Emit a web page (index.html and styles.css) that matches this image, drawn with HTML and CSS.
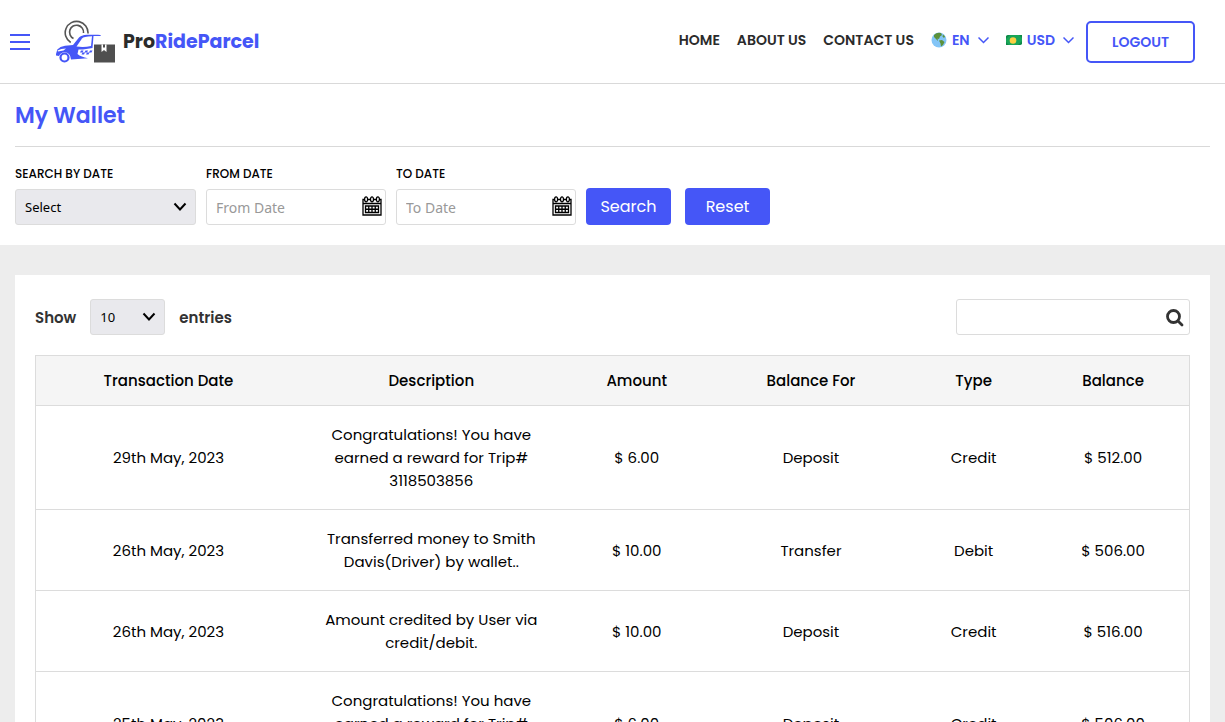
FILE: index.html
```html
<!DOCTYPE html>
<html lang="en">

<head>
    <meta charset="UTF-8">
    <meta name="viewport" content="width=device-width, initial-scale=1.0">
    <title>My Wallet</title>
    <link rel="stylesheet" href="styles.css">
</head>

<body>
    <header class="header">
        <button class="menu-btn" type="button" aria-label="Menu">
            <span></span>
            <span></span>
            <span></span>
        </button>
        <a class="logo" href="#">
            <svg width="60" height="44" viewBox="0 0 60 44" aria-hidden="true">
                <!-- pin -->
                <path d="M14.700 22.500A11.400 11.400 0 1 1 32 13.500" fill="none" stroke="#555" stroke-width="1.600" />
                <path d="M17.500 18.500A7 7 0 1 1 27.500 13" fill="none" stroke="#555" stroke-width="1.600" />
                <!-- car -->
                <path d="M0 34L1.300 29.500Q4 26.500 9 25.800L17 25L23 17.500Q25 15.200 31 14.700H42Q45 14.700 45 16H37.500L36.500 28L27 29.500L22.500 29.500L21.500 34Q25 37 32 38.200L15 39.500Q14.500 32.500 8.500 32.300Q4.500 32.500 3 36L0 35.500Z" fill="#4556f7" />
                <path d="M20.500 26.500L26 18.500Q27.500 16.500 36 16.300L35 26Q28 27.500 20.500 26.500Z" fill="#fff" />
                <path d="M1.500 30.500Q5 28.500 10 28.500L7.500 30.500L2 31.500Z" fill="#fff" />
                <circle cx="8.500" cy="37.500" r="4" fill="#fff" stroke="#4556f7" stroke-width="2.200" />
                <path d="M25 30.500h2.500l-1 2h-2.500zM29.500 30.500h2.500l-1 2h-2.500zM34 30.500h2.500l-1 2h-2.500zM26.500 32.500h2.500l-1 2h-2.500zM31 32.500h2.500l-1 2h-2.500z" fill="#4556f7" />
                <!-- parcel -->
                <path d="M38 24.500H59V42.500H38Z" fill="#4f4f4f" />
                <path d="M45.500 24.500h5v7.500l-2.500-2l-2.500 2z" fill="#fff" />
                <path d="M47 24.500h2v3h-2z" fill="#4f4f4f" />
            </svg>
            <span class="logo-text">Pro<span>RideParcel</span></span>
        </a>
        <nav class="nav">
            <a href="#">HOME</a>
            <a href="#">ABOUT US</a>
            <a href="#">CONTACT US</a>
            <button class="picker" type="button">
                <svg width="16" height="16" viewBox="0 0 16 16" aria-hidden="true">
                    <circle cx="8" cy="8" r="7.500" fill="#83c5f7" />
                    <path d="M3 3Q6 0 10 1L11 3L9 4.500L8 7L6.500 6.500L7 9L4.500 6.500L3 5Z" fill="#5c913b" />
                    <path d="M8 8.500L11 8L13.500 10L12 13L10 14.500L9.500 11.500Z" fill="#5c913b" />
                    <path d="M12 2.500L14 4.500L13 6L11.500 4.500Z" fill="#5c913b" />
                </svg>
                EN
                <svg class="caret" width="11" height="8" viewBox="0 0 11 8" aria-hidden="true">
                    <path d="M0.500 1.500L5.500 6.500L10.500 1.500" />
                </svg>
            </button>
            <button class="picker" type="button">
                <svg width="16" height="10" viewBox="0 0 16 10" aria-hidden="true">
                    <path d="M2 0H16V9L14 10H0V1Z" fill="#18a558" />
                    <path d="M0 4L4 0H2L0 1ZM0 7L3 10H0ZM16 3L13 0H16ZM16 6L12 10H14L16 9Z" fill="#0f8a48" />
                    <circle cx="7" cy="5.500" r="3.300" fill="#fbd043" />
                </svg>
                USD
                <svg class="caret" width="11" height="8" viewBox="0 0 11 8" aria-hidden="true">
                    <path d="M0.500 1.500L5.500 6.500L10.500 1.500" />
                </svg>
            </button>
        </nav>
        <button class="logout" type="button">LOGOUT</button>
    </header>

    <section class="top">
        <h1>My Wallet</h1>
        <form class="filter">
            <div class="field period">
                <label for="period">SEARCH BY DATE</label>
                <div class="select-box">
                    <select id="period">
                        <option>Select</option>
                    </select>
                    <svg class="arrow" width="14" height="10" viewBox="0 0 14 10" aria-hidden="true">
                        <path d="M1.500 1.500L7 7.500L12.500 1.500" />
                    </svg>
                </div>
            </div>
            <div class="field">
                <label for="from">FROM DATE</label>
                <div class="date-box">
                    <input type="text" id="from" placeholder="From Date">
                    <svg class="calendar" width="20" height="20" viewBox="0 0 20 20" aria-hidden="true">
                        <path d="M2 3.500H1V19H19V3.500H18M1 7.500H19M6 3.500H8M12 3.500H14" />
                        <path d="M3.500 10H16.500V16.500H3.500ZM3.500 13.250H16.500M6.750 10V16.500M10 10V16.500M13.250 10V16.500" />
                        <path d="M2.600 3.300a1.500 2.500 0 1 0 3 0a1.500 2.500 0 1 0-3 0M8.500 3.300a1.500 2.500 0 1 0 3 0a1.500 2.500 0 1 0-3 0M14.400 3.300a1.500 2.500 0 1 0 3 0a1.500 2.500 0 1 0-3 0" />
                    </svg>
                </div>
            </div>
            <div class="field">
                <label for="to">TO DATE</label>
                <div class="date-box">
                    <input type="text" id="to" placeholder="To Date">
                    <svg class="calendar" width="20" height="20" viewBox="0 0 20 20" aria-hidden="true">
                        <path d="M2 3.500H1V19H19V3.500H18M1 7.500H19M6 3.500H8M12 3.500H14" />
                        <path d="M3.500 10H16.500V16.500H3.500ZM3.500 13.250H16.500M6.750 10V16.500M10 10V16.500M13.250 10V16.500" />
                        <path d="M2.600 3.300a1.500 2.500 0 1 0 3 0a1.500 2.500 0 1 0-3 0M8.500 3.300a1.500 2.500 0 1 0 3 0a1.500 2.500 0 1 0-3 0M14.400 3.300a1.500 2.500 0 1 0 3 0a1.500 2.500 0 1 0-3 0" />
                    </svg>
                </div>
            </div>
            <div class="filter-btns">
                <button class="btn" type="button">Search</button>
                <button class="btn" type="reset">Reset</button>
            </div>
        </form>
    </section>

    <main class="panel">
        <div class="tools">
            <label for="entries">Show</label>
            <div class="select-box small">
                <select id="entries">
                    <option>10</option>
                    <option>25</option>
                    <option>50</option>
                </select>
                <svg class="arrow" width="14" height="10" viewBox="0 0 14 10" aria-hidden="true">
                    <path d="M1.500 1.500L7 7.500L12.500 1.500" />
                </svg>
            </div>
            <span>entries</span>
            <div class="search-box">
                <input type="text" aria-label="Search entries">
                <svg class="glass" width="18" height="18" viewBox="0 0 18 18" aria-hidden="true">
                    <circle cx="7.500" cy="7.500" r="6" />
                    <path d="M12 12L16 16" />
                </svg>
            </div>
        </div>
        <table class="wallet">
            <thead>
                <tr>
                    <th class="col-date">Transaction Date</th>
                    <th class="col-desc">Description</th>
                    <th class="col-amount">Amount</th>
                    <th class="col-for">Balance For</th>
                    <th class="col-type">Type</th>
                    <th>Balance</th>
                </tr>
            </thead>
            <tbody>
                <tr>
                    <td>29th May, 2023</td>
                    <td>Congratulations! You have earned a reward for Trip# 3118503856</td>
                    <td>$ 6.00</td>
                    <td>Deposit</td>
                    <td>Credit</td>
                    <td>$ 512.00</td>
                </tr>
                <tr>
                    <td>26th May, 2023</td>
                    <td>Transferred money to Smith Davis(Driver) by wallet..</td>
                    <td>$ 10.00</td>
                    <td>Transfer</td>
                    <td>Debit</td>
                    <td>$ 506.00</td>
                </tr>
                <tr>
                    <td>26th May, 2023</td>
                    <td>Amount credited by User via credit/debit.</td>
                    <td>$ 10.00</td>
                    <td>Deposit</td>
                    <td>Credit</td>
                    <td>$ 516.00</td>
                </tr>
                <tr>
                    <td>25th May, 2023</td>
                    <td>Congratulations! You have earned a reward for Trip# 3118503856</td>
                    <td>$ 6.00</td>
                    <td>Deposit</td>
                    <td>Credit</td>
                    <td>$ 506.00</td>
                </tr>
            </tbody>
        </table>
    </main>
</body>

</html>
```
FILE: styles.css
```css
* {
    box-sizing: border-box;
}

html {
    scrollbar-width: none;
}

body {
    margin: 0;
    background-color: #ededed;
    color: #000;
    font-family: Poppins, Inter, sans-serif;
    font-size: 15px;
}

a {
    color: inherit;
    text-decoration: none;
}

button,
input,
select {
    margin: 0;
    font-family: inherit;
}

button {
    cursor: pointer;
}

/* header */
.header {
    display: flex;
    align-items: center;
    height: 84px;
    padding: 0 30px 0 10px;
    border-bottom: 1px solid #d9d9d9;
    background-color: #fff;
}

.menu-btn {
    display: flex;
    flex-direction: column;
    gap: 5px;
    width: 20px;
    padding: 0;
    border: 0;
    background: none;
}

.menu-btn span {
    height: 2px;
    background-color: #4556f7;
}

.logo {
    display: flex;
    align-items: center;
    gap: 7px;
    margin-left: 26px;
}

.logo-text {
    color: #2b2b2b;
    font-size: 19px;
    font-weight: 700;
}

.logo-text span {
    color: #4556f7;
}

.nav {
    display: flex;
    align-items: center;
    gap: 17px;
    margin-left: auto;
    padding-bottom: 3px;
    color: #2b2b2b;
    font-size: 14px;
    font-weight: 600;
    line-height: 20px;
}

.picker {
    display: flex;
    align-items: center;
    gap: 5px;
    padding: 0;
    border: 0;
    background: none;
    color: #4556f7;
    font-size: 14px;
    font-weight: 600;
    line-height: 20px;
}

.caret {
    margin-left: 3px;
    fill: none;
    stroke: #4556f7;
    stroke-width: 1.5;
}

.logout {
    width: 109px;
    height: 42px;
    margin-left: 12px;
    padding: 2px 0 0;
    border: 2px solid #4556f7;
    border-radius: 5px;
    background-color: #fff;
    color: #4556f7;
    font-size: 14px;
    font-weight: 600;
}

/* title and filter */
.top {
    padding: 0 15px 20px;
    background-color: #fff;
}

.top h1 {
    margin: 0 0 17px;
    padding: 16px 0 15px;
    border-bottom: 1px solid #d9d9d9;
    color: #4556f7;
    font-size: 22px;
    font-weight: 600;
    line-height: 31px;
}

.filter {
    display: flex;
    align-items: flex-end;
    gap: 10px;
}

.field {
    width: 180px;
}

.period {
    width: 181px;
}

.field label {
    display: block;
    margin-bottom: 5px;
    font-size: 12px;
    font-weight: 500;
    line-height: 20px;
}

.select-box,
.date-box,
.search-box {
    position: relative;
}

.select-box select,
.date-box input,
.search-box input {
    display: block;
    width: 100%;
    height: 36px;
    padding: 0 9px;
    border: 1px solid #dcdcdc;
    border-radius: 3px;
    background-color: #fff;
    font-family: "Noto Sans", sans-serif;
    font-size: 14px;
}

.select-box select {
    appearance: none;
    background-color: #e9e9ed;
    color: #000;
    font-size: 13px;
}

.date-box input::placeholder {
    color: #999;
}

.arrow {
    position: absolute;
    top: 13px;
    right: 9px;
    fill: none;
    stroke: #000;
    stroke-width: 2;
    pointer-events: none;
}

.calendar {
    position: absolute;
    top: 7px;
    right: 4px;
    fill: none;
    stroke: #000;
    stroke-width: 1.3;
}

.filter-btns {
    display: flex;
    gap: 14px;
}

.btn {
    width: 85px;
    height: 37px;
    padding: 0;
    border: 0;
    border-radius: 4px;
    background-color: #4556f7;
    color: #fff;
    font-size: 16px;
}

/* table panel */
.panel {
    margin: 30px 15px;
    padding: 24px 20px;
    background-color: #fff;
}

.tools {
    display: flex;
    align-items: center;
    gap: 14px;
    margin-bottom: 20px;
    color: #333;
    font-weight: 600;
}

.small {
    width: 75px;
}

.search-box {
    width: 234px;
    margin-left: auto;
}

.glass {
    position: absolute;
    top: 10px;
    right: 6px;
    fill: none;
    stroke: #333;
    stroke-width: 2.8;
    stroke-linecap: round;
}

.wallet {
    width: 100%;
    border: 1px solid #dcdcdc;
    border-collapse: collapse;
    table-layout: fixed;
    line-height: 23px;
    text-align: center;
}

.wallet th {
    padding: 13px 20px;
    background-color: #f5f5f5;
    font-weight: 500;
}

.wallet td {
    padding: 17px 20px;
    border-top: 1px solid #dcdcdc;
}

.col-date {
    width: 23%;
}

.col-desc {
    width: 22.6%;
}

.col-amount {
    width: 13%;
}

.col-for {
    width: 17.2%;
}

.col-type {
    width: 11%;
}
```
